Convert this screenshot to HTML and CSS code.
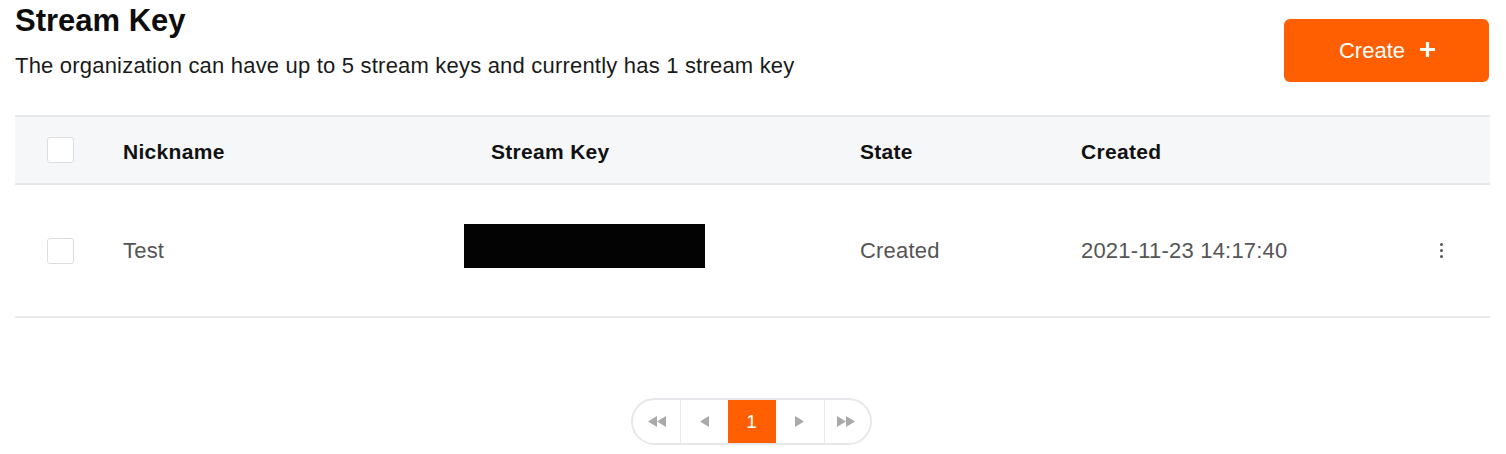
FILE: index.html
```html
<!DOCTYPE html>
<html>
<head>
<meta charset="utf-8">
<link rel="stylesheet" href="styles.css">
</head>
<body>
<div class="page">
  <div class="head">
    <div class="head-text">
      <h1 class="title">Stream Key</h1>
      <p class="subtitle">The organization can have up to 5 stream keys and currently has 1 stream key</p>
    </div>
    <button class="create-btn">Create <svg class="plus" width="17" height="17" viewBox="0 0 17 17"><path d="M8.5 1 V16 M1 8.5 H16" stroke="#fff" stroke-width="3.2" fill="none"/></svg></button>
  </div>

  <div class="table">
    <div class="row header">
      <div class="cell check-cell"><span class="checkbox"></span></div>
      <div class="cell">Nickname</div>
      <div class="cell">Stream Key</div>
      <div class="cell">State</div>
      <div class="cell">Created</div>
      <div class="cell"></div>
    </div>
    <div class="row body-row">
      <div class="cell check-cell"><span class="checkbox"></span></div>
      <div class="cell">Test</div>
      <div class="cell key-cell"><span class="redact"></span></div>
      <div class="cell">Created</div>
      <div class="cell">2021-11-23 14:17:40</div>
      <div class="cell kebab-cell">
        <span class="kebab"><i></i><i></i><i></i></span>
      </div>
    </div>
  </div>

  <div class="pager-wrap">
    <div class="pager">
      <span class="pg first"><svg width="20" height="13" viewBox="0 0 20 13"><path d="M10 1 L1 6.5 L10 12 Z M19 1 L10 6.5 L19 12 Z" fill="#a9a9a9"/></svg></span>
      <span class="pg"><svg width="11" height="13" viewBox="0 0 11 13"><path d="M10 1 L1 6.5 L10 12 Z" fill="#a9a9a9"/></svg></span>
      <span class="pg active">1</span>
      <span class="pg"><svg width="11" height="13" viewBox="0 0 11 13"><path d="M1 1 L10 6.5 L1 12 Z" fill="#a9a9a9"/></svg></span>
      <span class="pg last"><svg width="20" height="13" viewBox="0 0 20 13"><path d="M1 1 L10 6.5 L1 12 Z M10 1 L19 6.5 L10 12 Z" fill="#a9a9a9"/></svg></span>
    </div>
  </div>
</div>
</body>
</html>
```

FILE: styles.css
```css
* { box-sizing: border-box; }
html, body { margin: 0; padding: 0; background: #fff; }
body {
  font-family: "Liberation Sans", Arial, Helvetica, sans-serif;
  color: #111;
}
.page {
  padding: 3px 16px 0 15px;
}
.head {
  display: flex;
  justify-content: space-between;
  align-items: flex-start;
}
.title {
  margin: 0;
  font-size: 31px;
  line-height: 36px;
  font-weight: 600;
  color: #0d0d0d;
}
.subtitle {
  margin: 14px 0 0 0;
  font-size: 22px;
  line-height: 26px;
  letter-spacing: 0.2px;
  color: #1a1a1a;
}
.create-btn {
  margin-top: 16px;
  margin-right: 1px;
  width: 205px;
  height: 63px;
  background: #ff5f00;
  border: none;
  border-radius: 6px;
  color: #fff;
  font-family: "Liberation Sans", Arial, sans-serif;
  font-size: 22px;
  display: flex;
  align-items: center;
  justify-content: center;
  gap: 14px;
  padding: 0 0 0 2px;
}
.plus {
  display: block;
  margin-top: -2px;
}
.table {
  margin-top: 33px;
}
.row {
  display: grid;
  grid-template-columns: 108px 368px 369px 221px 313px 96px;
  align-items: center;
}
.header {
  height: 70px;
  padding-top: 3px;
  background: #f6f7f9;
  border-top: 2px solid #e6e8eb;
  border-bottom: 2px solid #e6e8eb;
  font-size: 21px;
  letter-spacing: 0.3px;
  font-weight: 600;
  color: #111;
}
.header .check-cell { margin-top: -3px; }
.body-row {
  height: 133px;
  border-bottom: 2px solid #e8eaed;
  font-size: 22px;
  letter-spacing: 0.2px;
  color: #555;
}
.check-cell {
  padding-left: 32px;
  display: flex;
  align-items: center;
}
.checkbox {
  display: block;
  width: 27px;
  height: 26px;
  background: #fff;
  border: 1px solid #dcdee1;
  border-radius: 3px;
}
.key-cell {
  margin-left: -27px;
}
.redact {
  display: block;
  width: 241px;
  height: 44px;
  margin-bottom: 9px;
  background: #030303;
}
.kebab-cell {
  display: flex;
  justify-content: center;
}
.kebab {
  display: flex;
  flex-direction: column;
  gap: 3px;
  margin-left: -1px;
}
.kebab i {
  display: block;
  width: 3px;
  height: 3px;
  border-radius: 50%;
  background: #555;
}
.pager-wrap {
  display: flex;
  justify-content: center;
  margin-top: 80px;
  padding-right: 3px;
}
.pager {
  display: flex;
  height: 47px;
  border: 2px solid #e6e8eb;
  border-radius: 24px;
  overflow: hidden;
}
.pg {
  width: 48px;
  display: flex;
  align-items: center;
  justify-content: center;
  border-left: 1px solid #e6e8eb;
  font-size: 19px;
  color: #555;
}
.pg.first { border-left: none; width: 47px; padding-left: 2px; }
.pg.last { width: 46px; padding-right: 2px; }
.pg.active {
  background: #ff5f00;
  color: #fff;
  border-left: none;
}
.pg.active + .pg { border-left: none; }
```
